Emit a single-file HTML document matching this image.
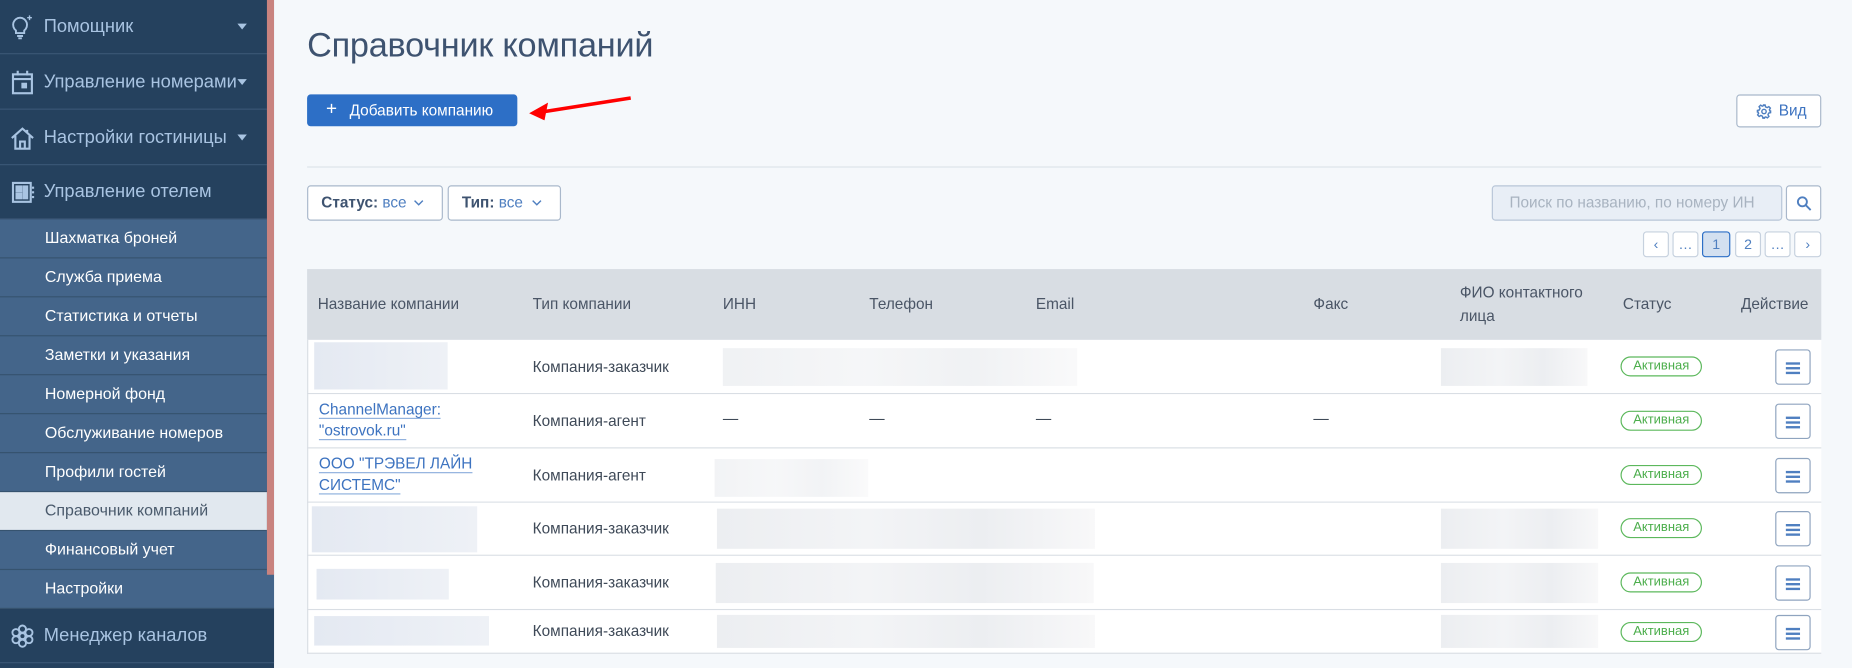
<!DOCTYPE html>
<html><head><meta charset="utf-8">
<style>
*{margin:0;padding:0;box-sizing:border-box}
html,body{width:1852px;height:668px;overflow:hidden;background:#f5f8fb}
body{font-family:"Liberation Sans","DejaVu Sans",sans-serif}
#w{position:absolute;left:0;top:0;width:1568px;height:566px;transform:scale(1.18112,1.1802);transform-origin:0 0;background:#f5f8fb}
.a{position:absolute}
.sb{position:absolute;left:0;top:0;width:232px;height:566px;background:#25415e}
.top{position:absolute;left:0;width:226px;height:46px;border-bottom:1px solid #3a5675;color:#a9c4e2;font-size:15.5px;line-height:46px;padding-left:37px;white-space:nowrap}
.top .car{position:absolute;left:201px;top:20px;width:0;height:0;border-left:4px solid transparent;border-right:4px solid transparent;border-top:5px solid #a9c4e2}
.top svg{position:absolute;left:9px;top:12px}
.sub{position:absolute;left:0;width:226px;height:33px;background:#44658a;border-bottom:1px solid #36536f;color:#fff;font-size:13.5px;line-height:32px;padding-left:38px}
.pink{position:absolute;left:226px;top:0;width:6px;height:487px;background:#c9837f}
h1{position:absolute;left:260px;top:23px;font-size:29px;font-weight:normal;color:#3e5370;letter-spacing:-0.2px}
.btn{position:absolute;left:260px;top:80px;width:178px;height:27px;background:#2d6fc6;border-radius:3px;color:#fff;font-size:13px;line-height:27px;padding-left:36px}
.box{position:absolute;background:#fff;border:1px solid #a9b8cb;border-radius:3px}
.th{position:absolute;top:228px;left:260px;width:1282px;height:60px;background:#d8dde3}
.hc{position:absolute;color:#4a5566;font-size:13px;line-height:20px}
.row{position:absolute;left:260px;width:1282px;background:#fff;border-bottom:1px solid #d9dee4}
.t{position:absolute;font-size:13px;color:#3f4a58}
.bl{position:absolute;background:linear-gradient(90deg,#eceef1,#f3f4f6 40%,#eceef1 70%,#f8f8f9)}
.bln{position:absolute;background:linear-gradient(90deg,#e4e9f2,#eef1f6)}
.bad{position:absolute;left:1112px;width:69px;height:17px;border:1px solid #5cb85c;border-radius:9px;color:#4cae4c;font-size:11px;line-height:15px;text-align:center}
.ab{position:absolute;left:1243px;width:30px;height:30px;border:1px solid #8fa4bf;border-radius:3px;background:#fff}
.ab i{position:absolute;left:8px;width:12px;height:1.5px;background:#4f7fc0}
.pg{position:absolute;top:196px;height:22px;background:#fff;border:1px solid #c6d1de;border-radius:3px;font-size:12px;color:#4f7fc0;text-align:center;line-height:20px}
a{color:#3d73c0;text-decoration:none;border-bottom:1px solid #8fb0dd}
</style></head><body><div id="w">
<div class="sb"></div>
<div class="top" style="top:0">
<svg width="20" height="22" viewBox="0 0 20 22" fill="none" stroke="#a9c4e2" stroke-width="1.6"><path d="M8 3a6 6 0 0 0-3.5 10.8V16h7v-2.2A6 6 0 0 0 8 3z"/><path d="M5.5 18.5h5M6.5 20.5h3"/><path d="M16 1v4M14 3h4" stroke-width="1.2"/></svg>Помощник<span class="car"></span></div>
<div class="top" style="top:47px"><svg width="20" height="22" viewBox="0 0 20 22" fill="none" stroke="#a9c4e2" stroke-width="1.8"><rect x="2" y="4" width="16" height="16"/><path d="M2 8h16M6 1v4M14 1v4"/><rect x="10" y="12" width="3" height="3" fill="#a9c4e2"/></svg>Управление номерами<span class="car"></span></div>
<div class="top" style="top:94px"><svg width="20" height="22" viewBox="0 0 20 22" fill="none" stroke="#a9c4e2" stroke-width="1.8"><path d="M1 11L10 3l9 8M4 9v11h12V9M8 20v-6h4v6M14 4v3"/></svg>Настройки гостиницы<span class="car"></span></div>
<div class="top" style="top:140px"><svg width="20" height="22" viewBox="0 0 20 22" fill="none" stroke="#a9c4e2" stroke-width="1.8"><rect x="2" y="3" width="15" height="16"/><rect x="5" y="6" width="4" height="4" fill="#a9c4e2"/><rect x="5" y="12" width="4" height="4" fill="#a9c4e2"/><rect x="11" y="6" width="3" height="10" fill="#a9c4e2"/><path d="M18 7h2M18 11h2M18 15h2"/></svg>Управление отелем</div>
<div class="sub" style="top:186px">Шахматка броней</div>
<div class="sub" style="top:219px">Служба приема</div>
<div class="sub" style="top:252px">Статистика и отчеты</div>
<div class="sub" style="top:285px">Заметки и указания</div>
<div class="sub" style="top:318px">Номерной фонд</div>
<div class="sub" style="top:351px">Обслуживание номеров</div>
<div class="sub" style="top:384px">Профили гостей</div>
<div class="sub" style="top:417px;background:#e1e8ef;color:#4a5a6c">Справочник компаний</div>
<div class="sub" style="top:450px">Финансовый учет</div>
<div class="sub" style="top:483px;width:232px">Настройки</div>
<div class="top" style="top:516px;width:232px;background:#25415e;border-bottom:1px solid #3a5675"><svg width="20" height="22" viewBox="0 0 20 22" fill="none" stroke="#a9c4e2" stroke-width="1.6"><circle cx="10" cy="11" r="2.5"/><circle cx="10" cy="5" r="3"/><circle cx="10" cy="17" r="3"/><circle cx="4.5" cy="8" r="3"/><circle cx="15.5" cy="8" r="3"/><circle cx="4.5" cy="14" r="3"/><circle cx="15.5" cy="14" r="3"/></svg>Менеджер каналов</div>
<div class="pink"></div>

<h1>Справочник компаний</h1>
<div class="btn"><span style="position:absolute;left:16px;top:-1px;font-size:16px">+</span>Добавить компанию</div>
<svg class="a" style="left:444px;top:78px" width="96" height="24" viewBox="0 0 96 24"><path d="M90 5L14 17" stroke="#f00" stroke-width="3"/><path d="M4 18L20 9L17 24Z" fill="#f00"/></svg>
<div class="box" style="left:1470px;top:80px;width:72px;height:28px;color:#3d73c0;font-size:13px;line-height:26px;padding-left:35px">Вид
<svg class="a" style="left:16px;top:7px" width="13" height="13" viewBox="0 0 14 14" fill="none" stroke="#4f7fc0" stroke-width="1.3"><circle cx="7" cy="7" r="2"/><path d="M6 1h2l.4 1.7 1.5.7 1.5-.9 1.4 1.4-.9 1.5.7 1.5L13 6v2l-1.7.4-.7 1.5.9 1.5-1.4 1.4-1.5-.9-1.5.7L8 13H6l-.4-1.7-1.5-.7-1.5.9-1.4-1.4.9-1.5-.7-1.5L1 8V6l1.7-.4.7-1.5-.9-1.5 1.4-1.4 1.5.9 1.5-.7z"/></svg></div>
<div class="a" style="left:260px;top:141px;width:1282px;height:1px;background:#dde3ea"></div>
<div class="box" style="left:260px;top:157px;width:115px;height:30px;font-size:13px;line-height:28px;padding-left:11px;color:#4f7fc0"><b style="color:#3e5370">Статус:</b> все
<svg class="a" style="left:89px;top:11px" width="9" height="6" viewBox="0 0 9 6" fill="none" stroke="#4f7fc0" stroke-width="1.2"><path d="M1 1l3.5 3.5L8 1"/></svg></div>
<div class="box" style="left:379px;top:157px;width:96px;height:30px;font-size:13px;line-height:28px;padding-left:11px;color:#4f7fc0"><b style="color:#3e5370">Тип:</b> все
<svg class="a" style="left:70px;top:11px" width="9" height="6" viewBox="0 0 9 6" fill="none" stroke="#4f7fc0" stroke-width="1.2"><path d="M1 1l3.5 3.5L8 1"/></svg></div>
<div class="box" style="left:1263px;top:157px;width:246px;height:30px;background:#e8eef6;border-color:#b8c6d8;font-size:13px;line-height:28px;padding-left:14px;color:#a8b3c0;overflow:hidden;white-space:nowrap">Поиск по названию, по номеру ИН</div>
<div class="box" style="left:1512px;top:157px;width:30px;height:30px"><svg class="a" style="left:8px;top:8px" width="13" height="13" viewBox="0 0 13 13" fill="none" stroke="#4f7fc0" stroke-width="1.6"><circle cx="5" cy="5" r="3.8"/><path d="M8 8l4 4"/></svg></div>
<div class="pg" style="left:1391px;width:22px">&#8249;</div>
<div class="pg" style="left:1416px;width:22px">…</div>
<div class="pg" style="left:1441px;width:24px;background:#d3e0f0;border-color:#2d6fc6">1</div>
<div class="pg" style="left:1469px;width:22px">2</div>
<div class="pg" style="left:1494px;width:22px">…</div>
<div class="pg" style="left:1519px;width:23px">&#8250;</div>

<div class="th">
<div class="hc" style="left:9px;top:20px">Название компании</div>
<div class="hc" style="left:191px;top:20px">Тип компании</div>
<div class="hc" style="left:352px;top:20px">ИНН</div>
<div class="hc" style="left:476px;top:20px">Телефон</div>
<div class="hc" style="left:617px;top:20px">Email</div>
<div class="hc" style="left:852px;top:20px">Факс</div>
<div class="hc" style="left:976px;top:10px">ФИО контактного<br>лица</div>
<div class="hc" style="left:1114px;top:20px">Статус</div>
<div class="hc" style="left:1214px;top:20px">Действие</div>
</div>

<div class="row" style="top:288px;height:46px">
<div class="bln" style="left:6px;top:2px;width:113px;height:40px"></div>
<div class="t" style="left:191px;top:15px">Компания-заказчик</div>
<div class="bl" style="left:352px;top:7px;width:300px;height:32px;opacity:.8"></div>
<div class="bl" style="left:960px;top:7px;width:124px;height:32px"></div>
<div class="bad" style="top:14px">Активная</div>
<div class="ab" style="top:8px"><i style="top:10px"></i><i style="top:14px"></i><i style="top:18px"></i></div>
</div>
<div class="row" style="top:334px;height:46px">
<div class="t" style="left:10px;top:4px;line-height:18px;font-size:13px"><a>ChannelManager:</a><br><a>"ostrovok.ru"</a></div>
<div class="t" style="left:191px;top:15px">Компания-агент</div>
<div class="t" style="left:352px;top:13px">—</div><div class="t" style="left:476px;top:13px">—</div><div class="t" style="left:617px;top:13px">—</div><div class="t" style="left:852px;top:13px">—</div>
<div class="bad" style="top:14px">Активная</div>
<div class="ab" style="top:8px"><i style="top:10px"></i><i style="top:14px"></i><i style="top:18px"></i></div>
</div>
<div class="row" style="top:380px;height:46px">
<div class="t" style="left:10px;top:4px;line-height:18px"><a>ООО "ТРЭВЕЛ ЛАЙН</a><br><a>СИСТЕМС"</a></div>
<div class="t" style="left:191px;top:15px">Компания-агент</div>
<div class="bl" style="left:345px;top:9px;width:130px;height:32px;opacity:.7"></div>
<div class="bad" style="top:14px">Активная</div>
<div class="ab" style="top:8px"><i style="top:10px"></i><i style="top:14px"></i><i style="top:18px"></i></div>
</div>
<div class="row" style="top:426px;height:45px">
<div class="bln" style="left:4px;top:3px;width:140px;height:39px"></div>
<div class="t" style="left:191px;top:14px">Компания-заказчик</div>
<div class="bl" style="left:347px;top:5px;width:320px;height:34px"></div>
<div class="bl" style="left:960px;top:5px;width:133px;height:34px"></div>
<div class="bad" style="top:13px">Активная</div>
<div class="ab" style="top:7px"><i style="top:10px"></i><i style="top:14px"></i><i style="top:18px"></i></div>
</div>
<div class="row" style="top:471px;height:46px">
<div class="bln" style="left:8px;top:11px;width:112px;height:26px"></div>
<div class="t" style="left:191px;top:15px">Компания-заказчик</div>
<div class="bl" style="left:346px;top:6px;width:320px;height:34px"></div>
<div class="bl" style="left:960px;top:6px;width:133px;height:34px"></div>
<div class="bad" style="top:14px">Активная</div>
<div class="ab" style="top:8px"><i style="top:10px"></i><i style="top:14px"></i><i style="top:18px"></i></div>
</div>
<div class="row" style="top:517px;height:37px">
<div class="bln" style="left:6px;top:5px;width:148px;height:25px"></div>
<div class="t" style="left:191px;top:10px">Компания-заказчик</div>
<div class="bl" style="left:347px;top:4px;width:320px;height:28px"></div>
<div class="bl" style="left:960px;top:4px;width:133px;height:28px"></div>
<div class="bad" style="top:10px">Активная</div>
<div class="ab" style="top:4px"><i style="top:10px"></i><i style="top:14px"></i><i style="top:18px"></i></div>
</div>
<div class="a" style="left:260px;top:288px;width:1px;height:266px;background:#d9dee4"></div>
</div></body></html>
